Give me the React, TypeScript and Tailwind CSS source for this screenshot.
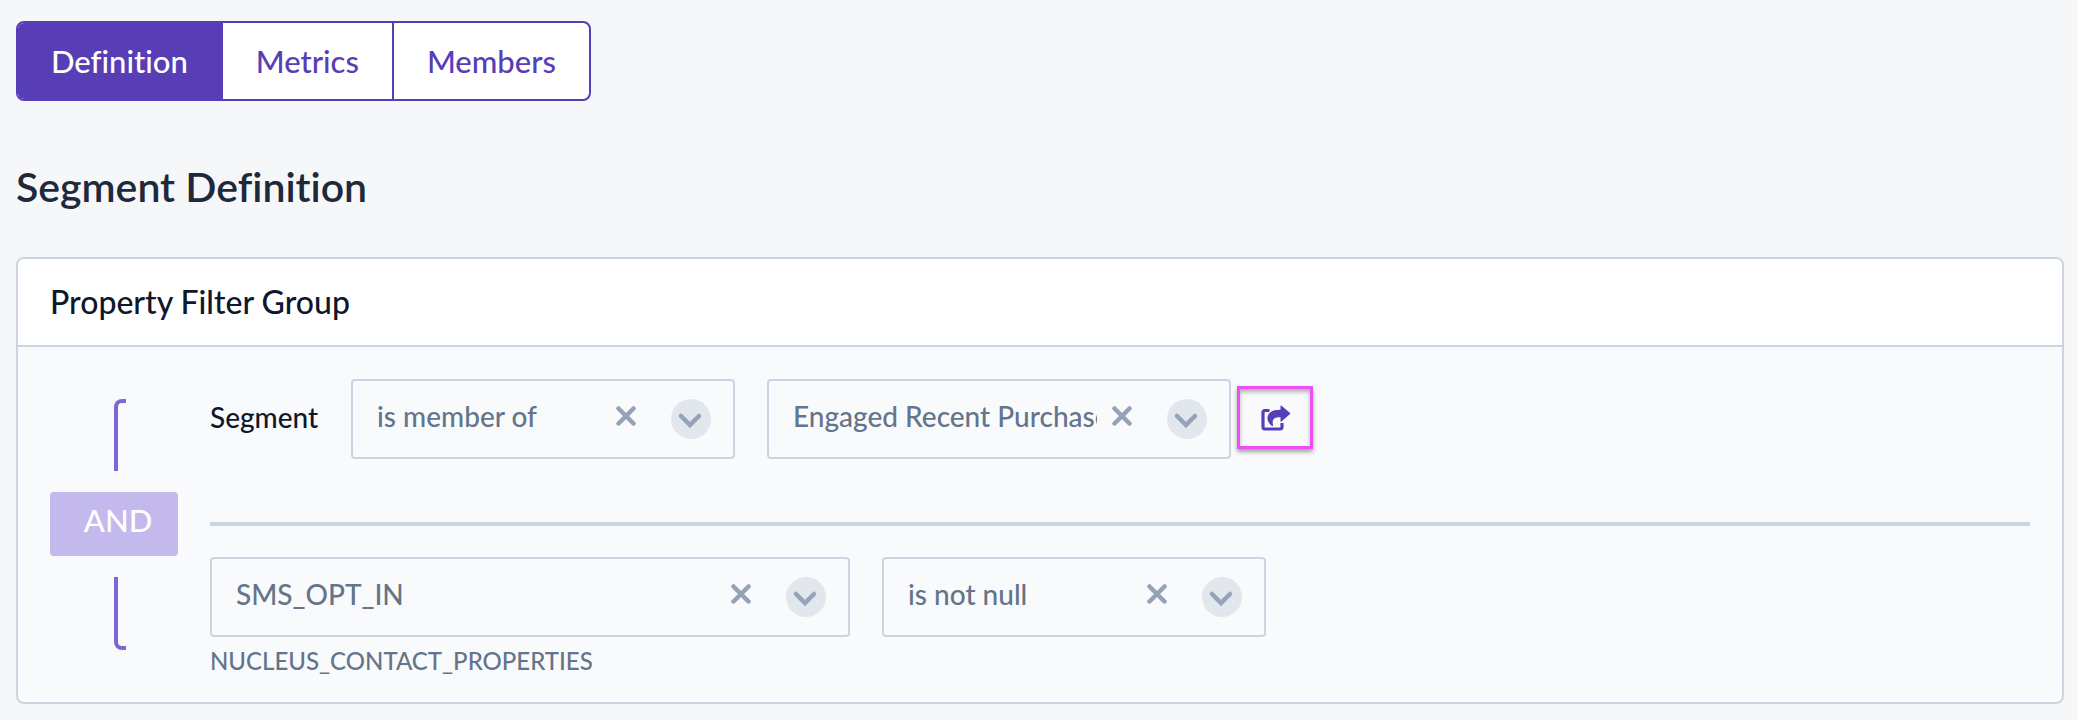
import { useState } from 'react'
import type { ReactNode } from 'react'

const tabs = ['Definition', 'Metrics', 'Members']

function CloseIcon() {
  return (
    <svg viewBox="0 0 20 20" className="size-5" aria-hidden="true">
      <path
        d="M2.500 2.500L17.500 17.500M17.500 2.500L2.500 17.500"
        fill="none"
        stroke="currentColor"
        strokeWidth="4.500"
        strokeLinecap="round"
      />
    </svg>
  )
}

function ChevronIcon() {
  return (
    <svg viewBox="0 0 40 40" className="size-10" aria-hidden="true">
      <circle cx="20" cy="20" r="20" fill="#e2e7ee" />
      <path
        d="M10 17L19 26L28 17"
        fill="none"
        stroke="currentColor"
        strokeWidth="4.500"
        strokeLinecap="round"
      />
    </svg>
  )
}

function ShareIcon() {
  return (
    <svg viewBox="0 0 30 26" className="h-[26px] w-[30px]" aria-hidden="true">
      <path
        d="M8.500 5.500H4A2 2 0 0 0 2 7.500V22A2 2 0 0 0 4 24H19A2 2 0 0 0 21 22V18"
        fill="none"
        stroke="currentColor"
        strokeWidth="3.200"
      />
      <path
        d="M19.500 1.200Q19.500 0 20.500 0.700L29 8Q29.600 8.500 29 9.100L20.500 16.600Q19.500 17.300 19.500 16V12.200C13 12.200 10.800 14 12 20.300C12.200 21.300 11.200 21.400 10.600 20.800C7.500 18.300 6 15.200 6.600 11.800C7.500 6.500 12.500 4.800 19.500 4.800Z"
        fill="currentColor"
      />
    </svg>
  )
}

type FilterSelectProps = {
  label: string
  value: string
  className: string
}

function FilterSelect({ label, value, className }: FilterSelectProps) {
  const [selected, setSelected] = useState(value)

  return (
    <div className={`relative h-20 ${className}`}>
      <select
        aria-label={label}
        value={selected}
        onChange={(e) => setSelected(e.target.value)}
        className="size-full appearance-none rounded border-2 border-[#cbd5e1] bg-transparent pb-1.5 pl-6 pr-[132px] text-[28px] font-medium text-[#64748b]"
      >
        <option value=""></option>
        <option value={value}>{value}</option>
      </select>
      <button
        type="button"
        aria-label={`Clear ${label}`}
        onClick={() => setSelected('')}
        className="absolute right-[99px] top-[27px] text-[#94a3b8]"
      >
        <CloseIcon />
      </button>
      <span className="pointer-events-none absolute right-6 top-5 text-[#94a3b8]">
        <ChevronIcon />
      </span>
    </div>
  )
}

function FilterRow({ children }: { children: ReactNode }) {
  return <div className="flex items-center gap-8">{children}</div>
}

export default function App() {
  const [activeTab, setActiveTab] = useState('Definition')

  return (
    <main className="min-h-dvh bg-[#f6f7f9] pb-4 pl-4 pr-3.5 pt-[21px] font-['Lato',sans-serif] text-[#0f172a] [font-variant-ligatures:none]">
      <nav className="flex h-20 w-fit divide-x-2 divide-[#573eb7] overflow-hidden rounded-lg border-2 border-[#573eb7] bg-white">
        {tabs.map((tab) => (
          <button
            key={tab}
            type="button"
            aria-pressed={tab === activeTab}
            onClick={() => setActiveTab(tab)}
            className={`px-[33px] text-[31px] font-medium ${
              tab === activeTab ? 'bg-[#573eb7] text-white' : 'text-[#573eb7]'
            }`}
          >
            {tab}
          </button>
        ))}
      </nav>

      <h1 className="mt-[62px] text-[41px] font-semibold leading-12 text-[#1e293b]">
        Segment Definition
      </h1>

      <section className="mt-[46px] overflow-hidden rounded-lg border-2 border-[#cbd5e1] bg-[#f9fafc]">
        <h2 className="border-b-2 border-[#cbd5e1] bg-white px-8 py-[19px] text-[32px] font-medium leading-12">
          Property Filter Group
        </h2>

        <div className="flex gap-8 px-8 pb-[23px] pt-8">
          <div className="flex w-32 flex-col items-center gap-[21px] pt-5">
            <span className="ml-3 h-[72px] w-3 rounded-tl-lg border-l-4 border-t-4 border-[#7c68d4]" />
            <button
              type="button"
              className="h-16 w-full rounded bg-[#c4b9ed] pb-2 pl-2 text-[31px] font-medium text-white"
            >
              AND
            </button>
            <span className="ml-3 h-[73px] w-3 rounded-bl-lg border-b-4 border-l-4 border-[#7c68d4]" />
          </div>

          <div className="min-w-0 flex-1">
            <FilterRow>
              <span className="w-[109px] pb-1 text-[28px] font-medium">Segment</span>
              <FilterSelect label="Operator" value="is member of" className="w-96" />
              <div className="flex items-center gap-1.5">
                <FilterSelect
                  label="Segment"
                  value="Engaged Recent Purchasers"
                  className="w-[464px]"
                />
                <a
                  href="#segment"
                  aria-label="Open segment"
                  className="mb-[3px] flex h-[63px] w-[76px] items-center justify-center border-3 border-[#ee4ff5] pl-0.5 text-[#573eb7] shadow-[0_3px_4px_rgba(0,0,0,0.35),inset_0_3px_4px_rgba(0,0,0,0.3)]"
                >
                  <ShareIcon />
                </a>
              </div>
            </FilterRow>

            <hr className="mb-[31px] mt-[63px] border-t-4 border-[#cbd5e1]" />

            <FilterRow>
              <FilterSelect label="Property" value="SMS_OPT_IN" className="w-[640px]" />
              <FilterSelect label="Condition" value="is not null" className="w-96" />
            </FilterRow>
            <p className="mt-1.5 text-[24px] font-medium leading-9 text-[#64748b]">
              NUCLEUS_CONTACT_PROPERTIES
            </p>
          </div>
        </div>
      </section>
    </main>
  )
}
